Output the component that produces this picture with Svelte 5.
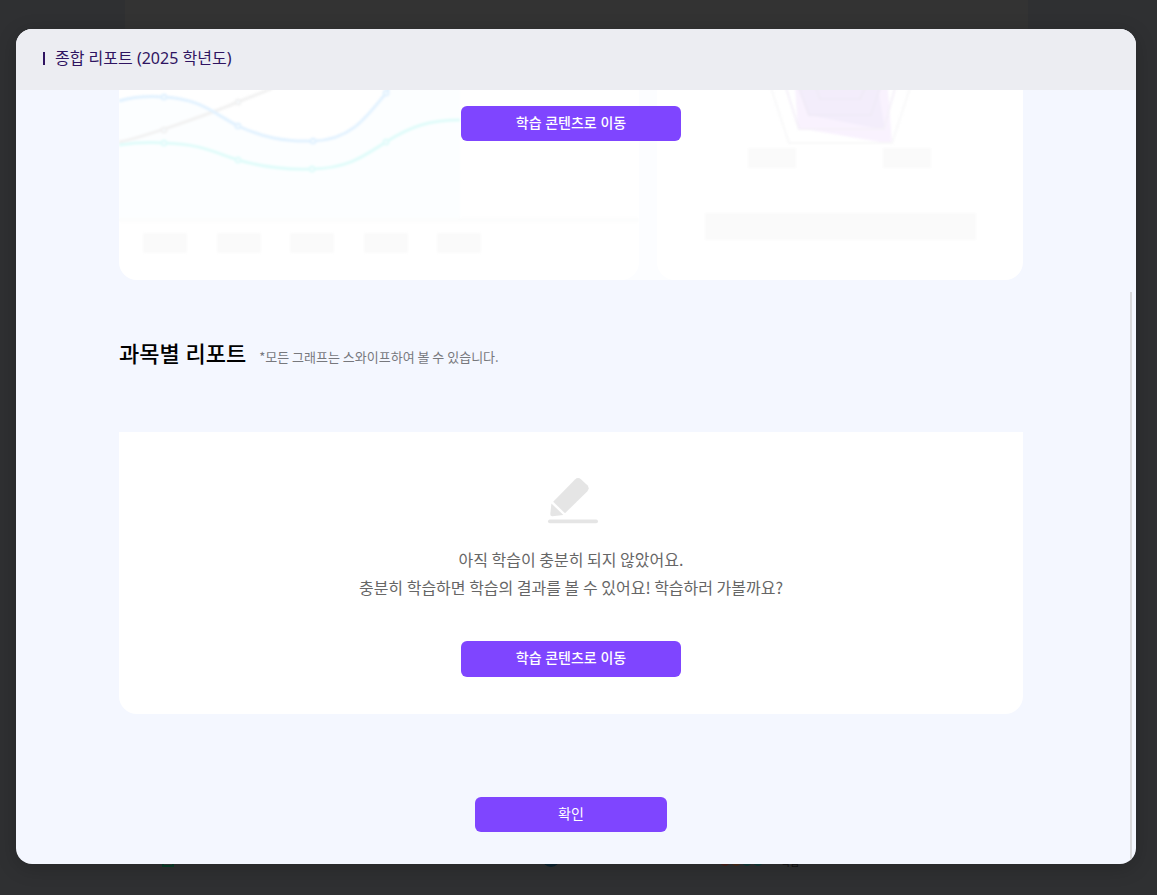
<script>
  const bluePath = 'M0 11 C14 7 30 6 45 7 C82 9 94 23 119 36 C143 47 165 52 194 51 C231 50 246 29 267 3 L270 -2';
  const tealPath = 'M0 55 C14 53 30 52 45 53 C82 54 94 62 119 70 C143 77 165 80 193 79 C231 78 246 65 267 52 C292 36 311 30 341 30';
  const axisLabels = [24, 98, 171, 245, 318];
  const points = {
    blue: [[45, 7], [119, 36], [194, 51], [267, 3]],
    gray: [[45, 40], [119, 12]],
    teal: [[45, 53], [119, 70], [193, 79], [267, 52]]
  };
  const colors = { blue: '#e2f2ff', gray: '#f2f2f2', teal: '#e0fcfa' };
</script>

<div class="page">
  <div class="page-column"></div>
  <footer class="partners">
    <span class="mark green"></span>
    <span class="mark blue"></span>
    <span class="dots"><i></i><i></i><i></i><i></i></span>
    <span class="partner">학급</span>
  </footer>
</div>

<div class="overlay">
  <div class="modal" role="dialog" aria-modal="true" aria-labelledby="report-title">
    <header>
      <h1 id="report-title">종합 리포트 (2025 학년도)</h1>
    </header>

    <main>
      <div class="content">
        <section class="summary">
          <div class="chart-card trend">
            <svg viewBox="0 0 520 190" aria-hidden="true">
              <g class="soft">
                <path d="{bluePath} H341 V130 H0 Z" fill="#fcfeff" />
                <path d="M0 130 H520" stroke="#fbfcfc" stroke-width="3" />
                <path d="M0 52 C22 48 88 25 119 12 L154 -2" class="line" stroke={colors.gray} />
                <path d={tealPath} class="line" stroke={colors.teal} />
                <path d={bluePath} class="line" stroke={colors.blue} />
                {#each Object.entries(points) as [name, list]}
                  {#each list as [x, y]}
                    <circle cx={x} cy={y} r="2.5" fill="#f6fcff" stroke={colors[name]} stroke-width="2" />
                  {/each}
                {/each}
                {#each axisLabels as x}
                  <rect {x} y="143" width="44" height="20" rx="2" fill="#fafafa" />
                {/each}
              </g>
            </svg>
          </div>
          <div class="chart-card radar">
            <svg viewBox="0 0 366 190" aria-hidden="true">
              <g class="soft">
                <path d="M138 -2 L141 38 L235 54 L231 -2 Z" fill="#f9f2fe" />
                <path d="M142 -2 L152 25 L228 40 L221 -2 Z" fill="#f3edfb" />
                <g fill="none" stroke-width="2">
                  <path d="M114 -2 L132 53 H235 L253 -2" stroke="#f8f8f9" />
                  <path d="M129 -2 L142 39 H227 L238 -2" stroke="#f5f1f9" />
                  <path d="M142 -2 L152 25 H214 L223 -2" stroke="#f0ebf7" />
                  <path d="M159 -2 L163 9 H203 L208 -2" stroke="#f0ebf7" />
                </g>
                <rect x="91" y="58" width="48" height="20" fill="#fafafa" />
                <rect x="226" y="58" width="48" height="20" fill="#fafafa" />
                <rect x="48" y="123" width="271" height="27" fill="#fafafa" />
              </g>
            </svg>
          </div>
          <button class="move">학습 콘텐츠로 이동</button>
        </section>

        <div class="section-title">
          <h2>과목별 리포트</h2>
          <p>*모든 그래프는 스와이프하여 볼 수 있습니다.</p>
        </div>

        <section class="empty">
          <svg class="pencil" width="52" height="48" viewBox="0 0 52 48" aria-hidden="true">
            <g fill="#e5e5e5">
              <path d="M6.2 24.8 L28 2.4 Q31 -0.4 34.2 2.4 L40.4 8.2 Q43 11.4 40.2 14.4 L18 36.2 Z" />
              <path d="M4.4 26.4 L16.4 38 L5.4 39.2 Q3.2 39.3 3.3 37 Z" />
              <rect x="1" y="42.6" width="50" height="3.6" rx="1.8" />
            </g>
          </svg>
          <p>아직 학습이 충분히 되지 않았어요.<br />충분히 학습하면 학습의 결과를 볼 수 있어요! 학습하러 가볼까요?</p>
          <button class="move">학습 콘텐츠로 이동</button>
        </section>

        <button class="confirm">확인</button>
      </div>
      <span class="scroll-thumb"></span>
    </main>
  </div>
</div>

<style>
  :global(body) {
    background: #2f3032;
    font-family: "Noto Sans CJK KR", sans-serif;
  }
  * { box-sizing: border-box; }
  h1, h2, p { margin: 0; }
  h1, h2, button { font-family: "Noto Sans", "Noto Sans CJK KR", sans-serif; }
  .page {
    position: absolute;
    inset: 0;
    display: flex;
    flex-direction: column;
    overflow: hidden;
  }
  .page-column {
    flex: 1;
    width: 78%;
    margin: 0 auto;
    margin-left: calc(11% - 2px);
    background: #333;
  }
  .partners {
    display: flex;
    height: 48px;
    padding-left: 162px;
    align-items: flex-start;
    background: #2f3032;
  }
  .mark { height: 20px; }
  .green { width: 12px; border: 2px solid #083d29; }
  .blue { width: 18px; margin-left: 368px; border-radius: 9px; background: #0b2330; }
  .dots { display: flex; gap: 1px; margin-left: 160px; }
  .dots i { width: 10px; height: 19px; border-radius: 5px; background: #4a2118; }
  .dots i:nth-child(2) { background: #4a2c18; }
  .dots i:nth-child(n + 3) { background: #0f3a38; }
  .partner { margin-left: 18px; font-size: 10px; line-height: 30px; color: #111; }
  .overlay {
    position: relative;
    display: flex;
    min-height: 100vh;
    padding: 29px 21px 31px 16px;
  }
  .modal {
    flex: 1;
    display: flex;
    flex-direction: column;
    overflow: hidden;
    border-radius: 16px;
    background: #f4f7ff;
    box-shadow: 0 4px 20px rgba(0, 0, 0, 0.2);
  }
  header {
    display: flex;
    height: 61px;
    padding: 0 27px 3px;
    align-items: center;
    background: #ecedf2;
  }
  h1 {
    display: flex;
    align-items: center;
    gap: 10px;
    font-size: 16px;
    line-height: 24px;
    font-weight: 400;
    color: #2f1461;
  }
  h1::before {
    content: "";
    width: 2px;
    height: 13px;
    background: #2f1461;
  }
  main {
    position: relative;
    flex: 1;
    padding: 0 113px 32px 103px;
  }
  .content { display: flex; flex-direction: column; }
  .summary {
    position: relative;
    display: grid;
    grid-template-columns: 520fr 366fr;
    gap: 18px;
    overflow: hidden;
    border-radius: 0 0 18px 18px;
    background: #fcfdff;
  }
  .chart-card {
    overflow: hidden;
    border-radius: 0 0 18px 18px;
    background: #fff;
  }
  .chart-card svg { display: block; width: 100%; }
  .soft { filter: blur(1px); }
  .line { fill: none; stroke-width: 3; }
  button {
    height: 36px;
    padding: 0 0 2px;
    border: 0;
    border-radius: 6px;
    background: #7f45ff;
    color: #fff;
    font-size: 14px;
    line-height: 20px;
    cursor: pointer;
  }
  .move { width: 220px; font-weight: 500; }
  .summary .move {
    position: absolute;
    top: 16px;
    left: 50%;
    height: 35px;
    transform: translateX(-50%);
  }
  .section-title {
    display: flex;
    margin-top: 57px;
    align-items: baseline;
    gap: 13px;
  }
  h2 { font-size: 22px; line-height: 32px; font-weight: 500; color: #000; }
  .section-title p { font-size: 13px; line-height: 20px; color: #77787d; }
  .empty {
    display: flex;
    flex-direction: column;
    align-items: center;
    margin-top: 63px;
    padding: 45px 20px 37px;
    border-radius: 0 0 18px 18px;
    background: #fff;
  }
  .pencil { margin-left: 4px; }
  .empty p {
    margin: 20px 0 40px;
    text-align: center;
    font-size: 16px;
    line-height: 28px;
    color: #666;
  }
  .confirm {
    align-self: center;
    width: 192px;
    height: 35px;
    margin-top: 83px;
  }
  .scroll-thumb {
    position: absolute;
    top: 202px;
    right: 4px;
    bottom: 0;
    width: 2px;
    background: #d9d9dc;
  }
</style>
